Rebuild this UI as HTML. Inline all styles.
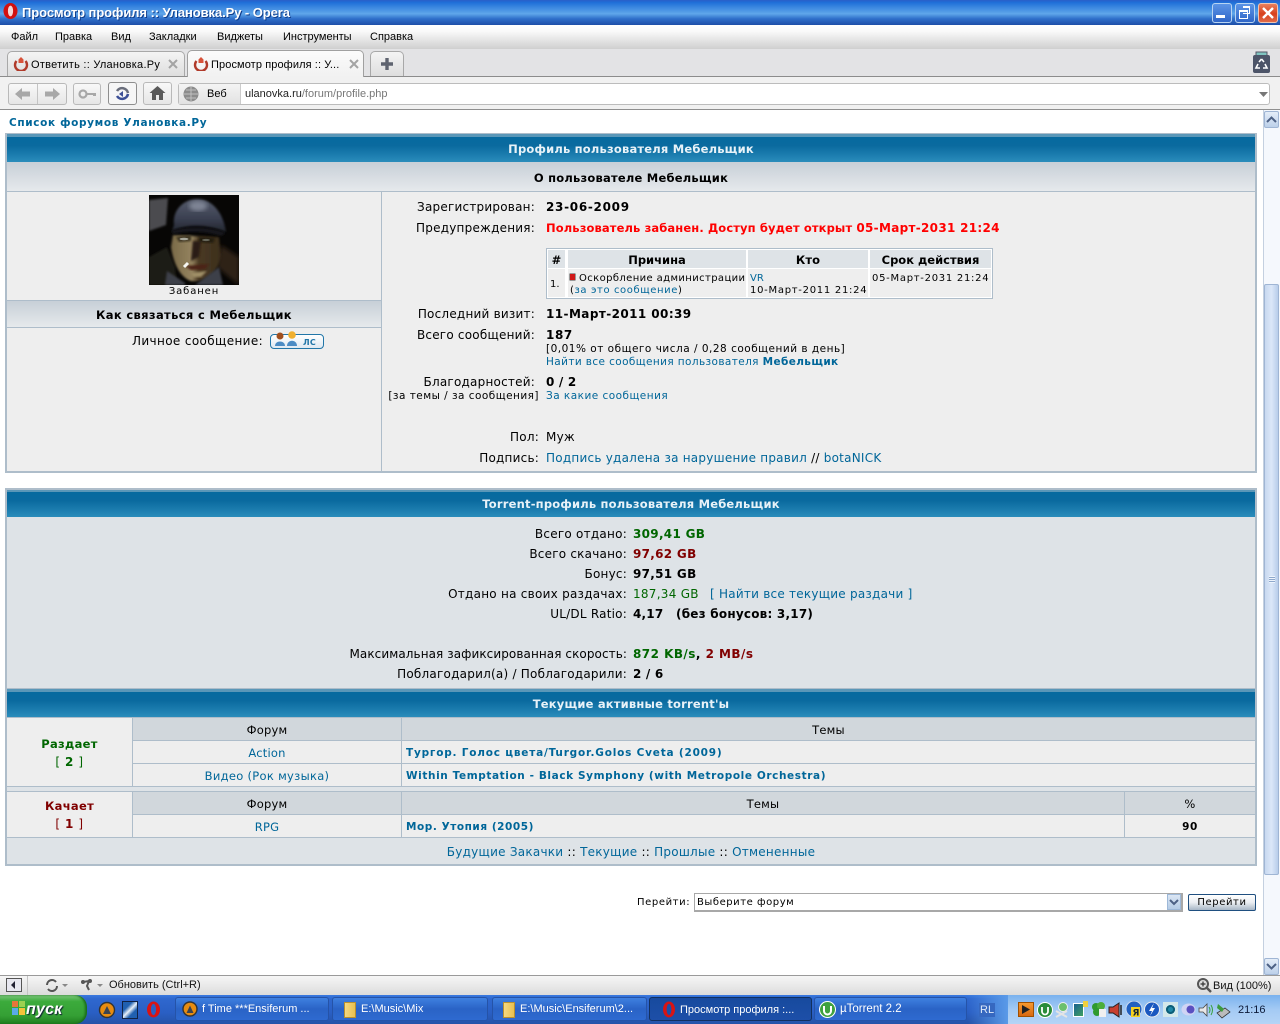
<!DOCTYPE html>
<html><head><meta charset="utf-8"><style>
html,body{margin:0;padding:0;background:#fff}
#r{position:relative;width:1280px;height:1024px;overflow:hidden;background:#fff;font-family:"DejaVu Sans","Liberation Sans",sans-serif;font-size:12px;color:#000;letter-spacing:.22px}
#r div,#r svg{position:absolute}
.t{white-space:nowrap;line-height:14px}
.c{text-align:center}.r{text-align:right}
.b{font-weight:bold}
.u{font-family:"Liberation Sans",sans-serif;font-size:11px;letter-spacing:0}
a,.l{color:#006699}
.blue{background:linear-gradient(#066a9f,#0a6a9f 35%,#2a8cbb);left:7px;width:1248px}
.wh{color:#e8f2f8;font-weight:bold;font-size:11.5px;letter-spacing:.2px}
.sub{background:linear-gradient(#c7cfd7,#e6e9ec);left:7px}
.line{background:#aebdca}
.btn{border:1px solid #b9b9b9;border-radius:3px;background:linear-gradient(#f8f8f8,#e6e6e6);box-sizing:border-box}
.task{top:997px;height:24px;border-radius:3px;box-sizing:border-box;background:linear-gradient(#3f80e0,#2a63c6 50%,#2e6ad0);border:1px solid #2553a8;color:#fff;font-family:"Liberation Sans",sans-serif;font-size:11px;line-height:22px;white-space:nowrap}
.v{font-weight:bold;letter-spacing:.4px}
.s{font-size:11.5px;letter-spacing:.2px}
.m{font-size:10.5px;letter-spacing:.45px}
.x{font-size:10px}
.tt{font-weight:bold;font-size:10.5px;letter-spacing:.6px;color:#006699}
</style></head><body><div id="r">

<!-- title bar -->
<div style="left:0;top:0;width:1280px;height:25px;background:linear-gradient(#2a5fc8 0,#1f6fd8 10%,#5fa6ea 55%,#2f6fca 75%,#1d4ea8 100%)"></div>
<svg style="left:3px;top:3px" width="15" height="16" viewBox="0 0 15 16"><ellipse cx="7.5" cy="8" rx="7" ry="8" fill="#d21010"/><ellipse cx="7.5" cy="8" rx="2.6" ry="5.4" fill="#f4d8d8"/></svg>
<div class="t b" style="left:22px;top:6px;color:#fff;font-family:'Liberation Sans',sans-serif;font-size:13px;letter-spacing:-.08px;text-shadow:1px 1px 0 #0f3d8c">Просмотр профиля :: Улановка.Ру - Opera</div>
<div style="left:1212px;top:3px;width:18px;height:18px;border:1px solid #b8d4f2;border-radius:3px;background:linear-gradient(#5c94e6,#2f66c8)"></div>
<div style="left:1216px;top:15px;width:9px;height:3px;background:#fff"></div>
<div style="left:1235px;top:3px;width:18px;height:18px;border:1px solid #b8d4f2;border-radius:3px;background:linear-gradient(#5c94e6,#2f66c8)"></div>
<div style="left:1239px;top:10px;width:7px;height:6px;border:1px solid #fff;border-top-width:2px"></div>
<div style="left:1243px;top:6px;width:6px;height:5px;border:1px solid #fff;border-top-width:2px;border-left:none"></div>
<div style="left:1258px;top:3px;width:18px;height:18px;border:1px solid #f0c4b0;border-radius:3px;background:linear-gradient(#e8805e,#d8401c 55%,#e06a48)"></div>
<svg style="left:1261px;top:6px" width="14" height="14"><path d="M2 2 L12 12 M12 2 L2 12" stroke="#fff" stroke-width="2.4"/></svg>

<!-- menu -->
<div style="left:0;top:25px;width:1280px;height:24px;background:linear-gradient(#fff,#fafafa 25%,#cfcfcf)"></div>
<div class="t u" style="left:11px;top:30px">Файл</div>
<div class="t u" style="left:55px;top:30px">Правка</div>
<div class="t u" style="left:111px;top:30px">Вид</div>
<div class="t u" style="left:149px;top:30px">Закладки</div>
<div class="t u" style="left:217px;top:30px">Виджеты</div>
<div class="t u" style="left:283px;top:30px">Инструменты</div>
<div class="t u" style="left:370px;top:30px">Справка</div>

<!-- tab bar -->
<div style="left:0;top:49px;width:1280px;height:28px;background:#e3e3e5"></div>
<div style="left:0;top:76px;width:1280px;height:1px;background:#8c8c8c"></div>
<div style="left:0;top:77px;width:1280px;height:32px;background:#f1f1f1"></div>
<div style="left:7px;top:51px;width:178px;height:25px;box-sizing:border-box;border:1px solid #a8a8a8;border-bottom:none;border-radius:5px 5px 0 0;background:linear-gradient(#f4f4f4,#dedede)"></div>
<div style="left:187px;top:50px;width:177px;height:27px;box-sizing:border-box;border:1px solid #a0a0a0;border-bottom:none;border-radius:5px 5px 0 0;background:linear-gradient(#fbfbfb,#f1f1f1)"></div>
<div style="left:370px;top:51px;width:34px;height:25px;box-sizing:border-box;border:1px solid #a8a8a8;border-bottom:none;border-radius:5px 5px 0 0;background:linear-gradient(#f4f4f4,#dedede)"></div>
<svg style="left:13px;top:56px" width="16" height="15" viewBox="0 0 16 15"><path d="M3.5 5 A6 6 0 1 0 12.5 5" fill="none" stroke="#b03a2a" stroke-width="2.4"/><path d="M5.5 7 V3.5 L8 1 L10.5 3.5 V7 Z" fill="#d8523a"/></svg>
<svg style="left:193px;top:56px" width="16" height="15" viewBox="0 0 16 15"><path d="M3.5 5 A6 6 0 1 0 12.5 5" fill="none" stroke="#b03a2a" stroke-width="2.4"/><path d="M5.5 7 V3.5 L8 1 L10.5 3.5 V7 Z" fill="#d8523a"/></svg>
<div class="t u" style="left:31px;top:58px;letter-spacing:.26px">Ответить :: Улановка.Ру</div>
<div class="t u" style="left:211px;top:58px;letter-spacing:.1px">Просмотр профиля :: У...</div>
<svg style="left:168px;top:59px" width="10" height="10"><path d="M1 1 L9 9 M9 1 L1 9" stroke="#a4a4a4" stroke-width="2"/></svg>
<svg style="left:349px;top:59px" width="10" height="10"><path d="M1 1 L9 9 M9 1 L1 9" stroke="#a4a4a4" stroke-width="2"/></svg>
<svg style="left:381px;top:58px" width="12" height="12"><path d="M6 0 V12 M0 6 H12" stroke="#5f6470" stroke-width="3.4"/></svg>
<svg style="left:1252px;top:51px" width="19" height="24" viewBox="0 0 19 24"><rect x="4" y="1" width="11" height="4" fill="#7fc4c0" stroke="#556"/><rect x="1" y="4" width="17" height="18" rx="2" fill="#4c5468"/><path d="M9.5 8 L12 11 M13 13 L15 17 H11 M8 17 H4 L6 13 M7 11 L9.5 8" fill="none" stroke="#fff" stroke-width="1.6"/></svg>

<!-- nav bar -->
<div class="btn" style="left:8px;top:83px;width:59px;height:22px"></div>
<div style="left:37px;top:84px;width:1px;height:20px;background:#c4c4c4"></div>
<svg style="left:14px;top:87px" width="18" height="14"><path d="M1 7 L8 1 V4.5 H16 V9.5 H8 V13 Z" fill="#a8a8a8"/></svg>
<svg style="left:43px;top:87px" width="18" height="14"><path d="M17 7 L10 1 V4.5 H2 V9.5 H10 V13 Z" fill="#a8a8a8"/></svg>
<div class="btn" style="left:73px;top:83px;width:28px;height:22px"></div>
<svg style="left:78px;top:88px" width="19" height="12"><circle cx="5" cy="6" r="3.5" fill="none" stroke="#a8a8a8" stroke-width="2.2"/><path d="M8 5 H18 V8 H15 V7 H8 Z" fill="#a8a8a8"/></svg>
<div class="btn" style="left:108px;top:82px;width:29px;height:23px;border-color:#8e8e8e;background:#f6f6f6"></div>
<svg style="left:113px;top:85px" width="19" height="17" viewBox="0 0 19 17"><path d="M4 6 A6 6 0 0 1 15 8" fill="none" stroke="#6a6e7c" stroke-width="2.6"/><path d="M15 9 A6 6 0 0 1 4 11" fill="none" stroke="#3c4f96" stroke-width="2.6"/><path d="M6 9 L10 6 V12 Z" fill="#3c4f96"/></svg>
<div class="btn" style="left:143px;top:82px;width:29px;height:23px"></div>
<svg style="left:149px;top:85px" width="17" height="16"><path d="M8.5 1 L16.5 8 H14 V15 H10 V10 H7 V15 H3 V8 H.5 Z" fill="#5a5a5a"/></svg>
<div style="left:178px;top:83px;width:1092px;height:22px;box-sizing:border-box;border:1px solid #bcbcbc;border-radius:3px;background:#fff"></div>
<div style="left:179px;top:84px;width:61px;height:20px;background:linear-gradient(#f4f4f4,#e2e2e2);border-right:1px solid #ccc"></div>
<svg style="left:183px;top:86px" width="16" height="16"><circle cx="8" cy="8" r="7.5" fill="#8c8c8c"/><path d="M1 8 H15 M8 1 V15 M3 4 H13 M3 12 H13" stroke="#c0c0c0" stroke-width="1"/></svg>
<div class="t u" style="left:207px;top:87px">Веб</div>
<div class="t u" style="left:245px;top:87px"><span style="color:#222">ulanovka.ru</span><span style="color:#777">/forum/profile.php</span></div>
<svg style="left:1259px;top:92px" width="9" height="5"><path d="M0 0 H9 L4.5 5 Z" fill="#777"/></svg>
<div style="left:0;top:109px;width:1280px;height:1px;background:#8f8f8f"></div>

<!-- breadcrumb -->
<div class="t b l" style="left:9px;top:116px;font-size:10.5px;letter-spacing:.65px">Список форумов Улановка.Ру</div>

<!-- TABLE 1 -->
<div style="left:5px;top:133px;width:1252px;height:340px;box-sizing:border-box;border:2px solid #aebdca;background:#eeeeee"></div>
<div style="left:7px;top:134px;width:1248px;height:3px;background:#5a97b8"></div>
<div class="blue" style="top:137px;height:25px"></div>
<div class="t c wh" style="left:7px;width:1248px;top:142px">Профиль пользователя Мебельщик</div>
<div class="sub" style="top:162px;width:1248px;height:29px"></div>
<div class="line" style="left:7px;top:191px;width:1248px;height:1px"></div>
<div class="t c b" style="left:7px;width:1248px;top:171px;font-size:11.5px;letter-spacing:.22px">О пользователе Мебельщик</div>
<div class="line" style="left:381px;top:192px;width:1px;height:279px"></div>

<!-- avatar -->
<svg style="left:149px;top:195px" width="90" height="90" viewBox="0 0 90 90">
<defs>
<linearGradient id="hg" x1="0" y1="0" x2="0" y2="1"><stop offset="0" stop-color="#565c6c"/><stop offset=".6" stop-color="#3a3f50"/><stop offset="1" stop-color="#22262f"/></linearGradient>
<linearGradient id="fg" x1="0" y1="0" x2="1" y2="0"><stop offset="0" stop-color="#7a6a48"/><stop offset=".42" stop-color="#94835f"/><stop offset=".55" stop-color="#4a3a24"/><stop offset="1" stop-color="#3c2e1c"/></linearGradient>
<filter id="bl"><feGaussianBlur stdDeviation="1"/></filter><filter id="bl2"><feGaussianBlur stdDeviation="2"/></filter>
</defs>
<rect width="90" height="90" fill="#070605"/>
<path d="M0 5 L19 3 L17 30 L0 36 Z" fill="#4c4c50" filter="url(#bl)"/>
<path d="M0 62 L18 52 L26 72 L28 90 H0 Z" fill="#1c1a18" filter="url(#bl)"/>
<path d="M72 50 L90 62 V90 L68 72 Z" fill="#2e2016" filter="url(#bl2)"/>
<path d="M24 40 L70 42 L72 60 C70 76 58 88 42 86 C30 82 24 66 22 52Z" fill="url(#fg)" filter="url(#bl)"/>
<path d="M25 30 C23 14 36 4 48 4 C62 4 74 16 77 37 C60 30 40 28 23 36Z" fill="url(#hg)" filter="url(#bl)"/>
<ellipse cx="49" cy="11" rx="9" ry="5" fill="#7e8494" filter="url(#bl2)"/>
<path d="M22 36 C40 30 62 32 77 38 L72 41 C55 36 40 36 24 39Z" fill="#15171d" filter="url(#bl)"/>
<path d="M27 42 L42 40 L42 46 L30 47Z" fill="#3c3420" filter="url(#bl)"/><path d="M50 42 L66 43 L64 48 L50 47Z" fill="#241c10" filter="url(#bl)"/>
<ellipse cx="35" cy="44" rx="4.5" ry="1.3" fill="#a8a89c"/><ellipse cx="57" cy="45" rx="4" ry="1.1" fill="#66665a"/>
<path d="M44 46 L52 46 L50 62 L42 66 Z" fill="#2a1f12" filter="url(#bl)"/>
<path d="M36 71 L60 69 L56 74 L42 75Z" fill="#4c2418" filter="url(#bl)"/>
<path d="M42 78 L58 76 L52 82 L44 82Z" fill="#a09068" filter="url(#bl)"/>
<path d="M35 72 L39 68" stroke="#f6f6f2" stroke-width="3"/>
<path d="M18 76 L36 88 V90 H16 Z M46 90 L70 72 L74 90Z" fill="#3c3f48" filter="url(#bl)"/>
</svg>
<div class="t c x" style="left:7px;width:374px;top:285px;letter-spacing:.9px">Забанен</div>
<div class="line" style="left:7px;top:300px;width:374px;height:1px"></div>
<div class="sub" style="top:301px;width:374px;height:26px"></div>
<div class="line" style="left:7px;top:327px;width:374px;height:1px"></div>
<div class="t c b" style="left:7px;width:374px;top:308px;font-size:11.5px;letter-spacing:.35px">Как связаться с Мебельщик</div>
<div class="t r" style="left:7px;width:256px;top:334px;letter-spacing:.37px">Личное сообщение:</div>
<div style="left:270px;top:334px;width:54px;height:15px;box-sizing:border-box;border:1px solid #2276a8;border-radius:4px;background:linear-gradient(#fff,#dfe9f2)"></div>
<svg style="left:273px;top:331px" width="28" height="17"><circle cx="7" cy="5" r="3.5" fill="#a05020"/><path d="M2 15 C2 9 12 9 12 15Z" fill="#4c8cc4"/><circle cx="19" cy="4" r="3.8" fill="#f0b030"/><path d="M14 15 C14 8 24 8 24 15Z" fill="#4c8cc4"/></svg>
<div class="t b" style="left:303px;top:336px;font-size:8px;color:#2276a8">ЛС</div>

<!-- profile rows -->
<div class="t r" style="left:382px;width:153px;top:200px">Зарегистрирован:</div>
<div class="t v" style="left:546px;top:200px;letter-spacing:.7px">23-06-2009</div>
<div class="t r" style="left:382px;width:153px;top:221px">Предупреждения:</div>
<div class="t b" style="left:546px;top:221px;color:#f00;font-size:11.5px;letter-spacing:.12px">Пользователь забанен. Доступ будет открыт <span style="font-size:12px;letter-spacing:.3px">05-Март-2031 21:24</span></div>

<div style="left:546px;top:248px;width:447px;height:51px;box-sizing:border-box;border:1px solid #aebdca;background:#fff"></div>
<div style="left:548px;top:250px;width:17px;height:18px;background:#dee3e7"></div>
<div style="left:568px;top:250px;width:178px;height:18px;background:#dee3e7"></div>
<div style="left:748px;top:250px;width:120px;height:18px;background:#dee3e7"></div>
<div style="left:870px;top:250px;width:121px;height:18px;background:#dee3e7"></div>
<div style="left:548px;top:269px;width:17px;height:28px;background:#eeeeee"></div>
<div style="left:568px;top:269px;width:178px;height:28px;background:#eeeeee"></div>
<div style="left:748px;top:269px;width:120px;height:28px;background:#eeeeee"></div>
<div style="left:870px;top:269px;width:121px;height:28px;background:#eeeeee"></div>
<div class="t c b" style="left:548px;width:17px;top:253px;font-size:11.5px;letter-spacing:0">#</div>
<div class="t c b" style="left:568px;width:178px;top:253px;font-size:11.5px;letter-spacing:0">Причина</div>
<div class="t c b" style="left:748px;width:120px;top:253px;font-size:11.5px;letter-spacing:.1px">Кто</div>
<div class="t c b" style="left:870px;width:121px;top:253px;font-size:11.5px;letter-spacing:0">Срок действия</div>
<div class="t x" style="left:550px;top:278px;letter-spacing:0">1.</div>
<div style="left:570px;top:274px;width:5px;height:6px;background:#d01818;box-shadow:0 0 0 .5px #444"></div>
<div class="t x" style="left:579px;top:272px;letter-spacing:.39px">Оскорбление администрации</div>
<div class="t x" style="left:570px;top:284px;letter-spacing:.6px">(<span class="l">за это сообщение</span>)</div>
<div class="t l x" style="left:750px;top:272px;letter-spacing:0">VR</div>
<div class="t x" style="left:750px;top:284px;letter-spacing:.72px">10-Март-2011 21:24</div>
<div class="t x" style="left:872px;top:272px;letter-spacing:.72px">05-Март-2031 21:24</div>

<div class="t r" style="left:382px;width:153px;top:307px">Последний визит:</div>
<div class="t v" style="left:546px;top:307px;letter-spacing:.42px">11-Март-2011 00:39</div>
<div class="t r" style="left:382px;width:153px;top:328px">Всего сообщений:</div>
<div class="t v" style="left:546px;top:328px;letter-spacing:.6px">187</div>
<div class="t m" style="left:546px;top:342px;letter-spacing:.5px">[0,01% от общего числа / 0,28 сообщений в день]</div>
<div class="t l m" style="left:546px;top:355px;letter-spacing:.39px">Найти все сообщения пользователя <b>Мебельщик</b></div>
<div class="t r" style="left:382px;width:153px;top:375px">Благодарностей:</div>
<div class="t v" style="left:546px;top:375px;letter-spacing:.2px">0 / 2</div>
<div class="t r m" style="left:382px;width:157px;top:389px;letter-spacing:.47px">[за темы / за сообщения]</div>
<div class="t l m" style="left:546px;top:389px;letter-spacing:.47px">За какие сообщения</div>
<div class="t r" style="left:382px;width:157px;top:430px">Пол:</div>
<div class="t" style="left:546px;top:430px">Муж</div>
<div class="t r" style="left:382px;width:157px;top:451px">Подпись:</div>
<div class="t" style="left:546px;top:451px;letter-spacing:.24px"><span class="l">Подпись удалена за нарушение правил</span> // <span class="l">botaNICK</span></div>

<!-- TABLE 2 -->
<div style="left:5px;top:488px;width:1252px;height:378px;box-sizing:border-box;border:2px solid #aebdca;background:#dee3e7"></div>
<div style="left:7px;top:490px;width:1248px;height:3px;background:#5a97b8"></div>
<div class="blue" style="top:492px;height:25px"></div>
<div class="t c wh" style="left:7px;width:1248px;top:497px">Torrent-профиль пользователя Мебельщик</div>

<div class="t r" style="left:7px;width:620px;top:527px;letter-spacing:.25px">Всего отдано:</div>
<div class="t v" style="left:633px;top:527px;color:#006600;letter-spacing:.3px">309,41 GB</div>
<div class="t r" style="left:7px;width:620px;top:547px">Всего скачано:</div>
<div class="t v" style="left:633px;top:547px;color:#800000;letter-spacing:.3px">97,62 GB</div>
<div class="t r" style="left:7px;width:620px;top:567px">Бонус:</div>
<div class="t v" style="left:633px;top:567px;letter-spacing:.3px">97,51 GB</div>
<div class="t r" style="left:7px;width:620px;top:587px;letter-spacing:.26px">Отдано на своих раздачах:</div>
<div class="t" style="left:633px;top:587px;color:#006600;letter-spacing:.27px">187,34 GB</div>
<div class="t l" style="left:710px;top:587px;letter-spacing:.24px">[ Найти все текущие раздачи ]</div>
<div class="t r" style="left:7px;width:620px;top:607px">UL/DL Ratio:</div>
<div class="t v" style="left:633px;top:607px;letter-spacing:.2px">4,17</div>
<div class="t b" style="left:676px;top:607px;letter-spacing:.22px">(без бонусов: 3,17)</div>
<div class="t r" style="left:7px;width:620px;top:647px;letter-spacing:.08px">Максимальная зафиксированная скорость:</div>
<div class="t v" style="left:633px;top:647px;letter-spacing:.46px"><span style="color:#006600">872 KB/s</span>, <span style="color:#800000">2 MB/s</span></div>
<div class="t r" style="left:7px;width:620px;top:667px;letter-spacing:.23px">Поблагодарил(а) / Поблагодарили:</div>
<div class="t v" style="left:633px;top:667px;letter-spacing:.2px">2 / 6</div>

<div class="line" style="left:7px;top:688px;width:1248px;height:1px"></div>
<div style="left:7px;top:689px;width:1248px;height:3px;background:#5a97b8"></div>
<div class="blue" style="top:692px;height:25px"></div>
<div class="t c wh" style="left:7px;width:1248px;top:697px">Текущие активные torrent'ы</div>

<!-- seeding -->
<div style="left:7px;top:717px;width:1248px;height:69px;background:#eeeeee"></div>
<div style="left:133px;top:718px;width:1122px;height:22px;background:#d1d7dc"></div>
<div class="line" style="left:7px;top:717px;width:1248px;height:1px"></div>
<div class="line" style="left:133px;top:740px;width:1122px;height:1px"></div>
<div class="line" style="left:133px;top:763px;width:1122px;height:1px"></div>
<div class="line" style="left:7px;top:786px;width:1248px;height:1px"></div>
<div class="line" style="left:132px;top:718px;width:1px;height:68px"></div>
<div class="line" style="left:401px;top:718px;width:1px;height:68px"></div>
<div class="t c b" style="left:7px;width:125px;top:737px;color:#006600;font-size:11.5px;letter-spacing:.3px">Раздает</div>
<div class="t c" style="left:7px;width:125px;top:755px;color:#006600;letter-spacing:.6px">[ <b>2</b> ]</div>
<div class="t c s" style="left:133px;width:268px;top:723px">Форум</div>
<div class="t c s" style="left:402px;width:853px;top:723px">Темы</div>
<div class="t c l s" style="left:133px;width:268px;top:746px;letter-spacing:.2px">Action</div>
<div class="t c l s" style="left:133px;width:268px;top:769px;letter-spacing:.3px">Видео (Рок музыка)</div>
<div class="t tt" style="left:406px;top:746px;letter-spacing:.8px">Тургор. Голос цвета/Turgor.Golos Cveta (2009)</div>
<div class="t tt" style="left:406px;top:769px">Within Temptation - Black Symphony (with Metropole Orchestra)</div>

<!-- leeching -->
<div style="left:7px;top:791px;width:1248px;height:46px;background:#eeeeee"></div>
<div style="left:133px;top:792px;width:1122px;height:22px;background:#d1d7dc"></div>
<div class="line" style="left:7px;top:791px;width:1248px;height:1px"></div>
<div class="line" style="left:133px;top:814px;width:1122px;height:1px"></div>
<div class="line" style="left:7px;top:837px;width:1248px;height:1px"></div>
<div class="line" style="left:132px;top:792px;width:1px;height:45px"></div>
<div class="line" style="left:401px;top:792px;width:1px;height:45px"></div>
<div class="line" style="left:1124px;top:792px;width:1px;height:45px"></div>
<div class="t c b" style="left:7px;width:125px;top:799px;color:#800000;font-size:11.5px;letter-spacing:.3px">Качает</div>
<div class="t c" style="left:7px;width:125px;top:817px;color:#800000;letter-spacing:.6px">[ <b>1</b> ]</div>
<div class="t c s" style="left:133px;width:268px;top:797px">Форум</div>
<div class="t c s" style="left:402px;width:722px;top:797px">Темы</div>
<div class="t c s" style="left:1125px;width:130px;top:797px">%</div>
<div class="t c l s" style="left:133px;width:268px;top:820px">RPG</div>
<div class="t tt" style="left:406px;top:820px;letter-spacing:.55px">Мор. Утопия (2005)</div>
<div class="t c b" style="left:1125px;width:130px;top:820px;font-size:10.5px;letter-spacing:.6px">90</div>

<div class="t c" style="left:7px;width:1248px;top:845px;letter-spacing:.25px"><span class="l">Будущие Закачки</span> :: <span class="l">Текущие</span> :: <span class="l">Прошлые</span> :: <span class="l">Отмененные</span></div>

<!-- jump -->
<div class="t x" style="left:637px;top:896px;letter-spacing:.6px">Перейти:</div>
<div style="left:694px;top:893px;width:489px;height:19px;box-sizing:border-box;border:1px solid #a8a8a8;border-bottom-width:2px;border-right-width:2px;background:#fff"></div>
<div class="t x" style="left:697px;top:896px;letter-spacing:.55px">Выберите форум</div>
<div style="left:1167px;top:894px;width:14px;height:16px;background:linear-gradient(#dbe6f4,#b4cbe6);border:1px solid #9db8d8;box-sizing:border-box"></div>
<svg style="left:1169px;top:899px" width="10" height="7"><path d="M1 1 L5 5 L9 1" fill="none" stroke="#4d6185" stroke-width="2"/></svg>
<div style="left:1188px;top:894px;width:68px;height:17px;box-sizing:border-box;border:1px solid #1f4f80;border-radius:2px;background:linear-gradient(#fff,#ebeef2 50%,#a8b6c6)"></div>
<div class="t c x" style="left:1188px;width:68px;top:896px;letter-spacing:.6px">Перейти</div>

<!-- scrollbar -->
<div style="left:1263px;top:110px;width:17px;height:866px;background:#f5f8fd;border-left:1px solid #c4d0e0;box-sizing:border-box"></div>
<div style="left:1264px;top:111px;width:15px;height:17px;box-sizing:border-box;border:1px solid #9fb5d4;border-radius:2px;background:linear-gradient(#e4edf8,#bcd0ea)"></div>
<svg style="left:1266px;top:116px" width="11" height="7"><path d="M1 6 L5.5 1.5 L10 6" fill="none" stroke="#4d6185" stroke-width="2"/></svg>
<div style="left:1264px;top:284px;width:15px;height:591px;box-sizing:border-box;border:1px solid #9fb5d4;border-radius:2px;background:linear-gradient(90deg,#c8d8f0,#dbe7f8 50%,#b8cdea)"></div>
<div style="left:1269px;top:576px;width:6px;height:7px;background:repeating-linear-gradient(#eef4fc 0 1px,#8ea8cc 1px 2px)"></div>
<div style="left:1264px;top:958px;width:15px;height:17px;box-sizing:border-box;border:1px solid #9fb5d4;border-radius:2px;background:linear-gradient(#e4edf8,#bcd0ea)"></div>
<svg style="left:1266px;top:963px" width="11" height="7"><path d="M1 1 L5.5 5.5 L10 1" fill="none" stroke="#4d6185" stroke-width="2"/></svg>

<!-- status bar -->
<div style="left:0;top:975px;width:1280px;height:1px;background:#9a9a9a"></div>
<div style="left:0;top:976px;width:1280px;height:19px;background:linear-gradient(#f6f6f6,#dcdcdc)"></div>
<div style="left:6px;top:978px;width:16px;height:14px;box-sizing:border-box;border:1px solid #555;background:#e8e8f0"></div>
<svg style="left:10px;top:981px" width="7" height="8"><path d="M5 0 L1 4 L5 8 Z" fill="#223"/></svg>
<div style="left:27px;top:976px;width:1px;height:19px;background:#c4c4c4"></div>
<svg style="left:46px;top:979px" width="22" height="13"><path d="M1 6 A5 5 0 0 1 10 3 M11 7 A5 5 0 0 1 2 10" fill="none" stroke="#555" stroke-width="2"/><path d="M16 5 H22 L19 8 Z" fill="#888"/></svg>
<svg style="left:80px;top:978px" width="24" height="14"><path d="M3 4 L9 3 L7 8 L9 12" fill="none" stroke="#555" stroke-width="2"/><circle cx="3" cy="4" r="2" fill="#555"/><circle cx="10" cy="3" r="2" fill="#555"/><path d="M17 6 H23 L20 9 Z" fill="#888"/></svg>
<div class="t u" style="left:109px;top:978px;color:#111">Обновить (Ctrl+R)</div>
<svg style="left:1196px;top:977px" width="16" height="16"><circle cx="7" cy="7" r="5" fill="#ddd" stroke="#555" stroke-width="2"/><path d="M10.5 10.5 L15 15" stroke="#555" stroke-width="2.4"/><path d="M4.5 7 H9.5 M7 4.5 V9.5" stroke="#333" stroke-width="1.2"/></svg>
<div class="t u" style="left:1213px;top:979px;color:#111">Вид (100%)</div>

<!-- taskbar -->
<div style="left:0;top:995px;width:1280px;height:29px;background:linear-gradient(#3a7ae0 0,#2f68cf 12%,#2a5fc4 60%,#2553a8)"></div>
<div style="left:968px;top:995px;width:40px;height:29px;background:linear-gradient(90deg,rgba(70,130,230,0),#5a9ae8)"></div>
<div style="left:0;top:995px;width:87px;height:29px;border-radius:0 12px 12px 0;background:linear-gradient(#7fc87f,#3cab3c 22%,#35a035 70%,#1f7f1f);box-shadow:inset -2px 0 2px #1a6c1a"></div>
<svg style="left:11px;top:1000px" width="15" height="16"><rect x="1" y="1" width="6" height="6" fill="#e8763a"/><rect x="8" y="1" width="6" height="6" fill="#9dd050"/><rect x="1" y="8" width="6" height="7" fill="#5aaae8"/><rect x="8" y="8" width="6" height="7" fill="#f5c33a"/></svg>
<div class="t" style="left:26px;top:1003px;color:#fff;font-family:'Liberation Sans',sans-serif;font-weight:bold;font-style:italic;font-size:16px;letter-spacing:.2px;text-shadow:1px 1px 1px #123">пуск</div>
<svg style="left:98px;top:1001px" width="18" height="18"><circle cx="9" cy="9" r="7.5" fill="#e88c10" stroke="#333" stroke-width="1.4"/><path d="M5 13 L9 5 L13 13 Z" fill="#3c4450"/></svg>
<div style="left:122px;top:1001px;width:14px;height:16px;background:linear-gradient(135deg,#2060b0 30%,#e8f0f8 50%,#2060b0 70%);border:1px solid #124"></div>
<svg style="left:146px;top:1001px" width="15" height="17"><ellipse cx="7.5" cy="8.5" rx="6.5" ry="8" fill="#d81414"/><ellipse cx="7.5" cy="8.5" rx="2.6" ry="5.6" fill="#2a5fc4"/></svg>

<div class="task" style="left:175px;width:154px"></div>
<svg style="left:182px;top:1001px" width="16" height="16"><circle cx="8" cy="8" r="7" fill="#e88c10" stroke="#333" stroke-width="1.4"/><path d="M4.5 12 L8 4.5 L11.5 12 Z" fill="#3c4450"/></svg>
<div class="t u" style="left:202px;top:1002px;color:#fff">f Time ***Ensiferum ...</div>
<div class="task" style="left:332px;width:156px"></div>
<div style="left:344px;top:1002px;width:10px;height:14px;background:linear-gradient(90deg,#f5d880,#e8c050);border:1px solid #b89030"></div>
<div class="t u" style="left:361px;top:1002px;color:#fff">E:\Music\Mix</div>
<div class="task" style="left:492px;width:155px"></div>
<div style="left:503px;top:1002px;width:10px;height:14px;background:linear-gradient(90deg,#f5d880,#e8c050);border:1px solid #b89030"></div>
<div class="t u" style="left:520px;top:1002px;color:#fff">E:\Music\Ensiferum\2...</div>
<div class="task" style="left:649px;width:163px;background:linear-gradient(#174a9e,#1d4fa8);border-color:#12305f"></div>
<svg style="left:662px;top:1001px" width="14" height="17"><ellipse cx="7" cy="8.5" rx="6" ry="8" fill="#d81414"/><ellipse cx="7" cy="8.5" rx="2.4" ry="5.6" fill="#1d4fa8"/></svg>
<div class="t u" style="left:680px;top:1003px;color:#fff">Просмотр профиля :...</div>
<div class="task" style="left:814px;width:153px"></div>
<svg style="left:819px;top:1001px" width="17" height="17"><circle cx="8.5" cy="8.5" r="8" fill="#3fa13f" stroke="#fff"/><path d="M5 5 V10 A3.5 3.5 0 0 0 12 10 V5" fill="none" stroke="#fff" stroke-width="2"/></svg>
<div class="t u" style="left:840px;top:1002px;color:#fff;font-size:11.5px">µTorrent 2.2</div>
<div class="t u" style="left:979px;top:1003px;color:#dfe9f8;background:#3668c0;padding:0 1px">RL</div>

<!-- tray -->
<div style="left:1008px;top:995px;width:272px;height:29px;background:linear-gradient(#7ab2ee,#a4caf4 50%,#b4d4f6)"></div>
<div style="left:1018px;top:1002px;width:16px;height:15px;background:linear-gradient(#f59a30,#d86810);border:1px solid #a05000;box-sizing:border-box"></div>
<svg style="left:1022px;top:1005px" width="8" height="9"><path d="M0 0 L8 4.5 L0 9Z" fill="#222"/></svg>
<svg style="left:1037px;top:1002px" width="16" height="16"><circle cx="8" cy="8" r="7.5" fill="#2a8c3a" stroke="#fff"/><path d="M5 5 V9.5 A3 3 0 0 0 11 9.5 V5" fill="none" stroke="#fff" stroke-width="1.8"/></svg>
<svg style="left:1054px;top:1001px" width="16" height="17"><circle cx="9" cy="6" r="4.5" fill="#6cc06c" stroke="#eee"/><path d="M2 16 L13 10 M13 16 L2 10" stroke="#e4e4e4" stroke-width="2"/></svg>
<div style="left:1073px;top:1003px;width:11px;height:14px;background:linear-gradient(135deg,#186090,#40a060);border:1px solid #fff;box-sizing:border-box"></div>
<div style="left:1083px;top:1001px;width:5px;height:6px;background:#f0d040"></div>
<svg style="left:1090px;top:1001px" width="17" height="17"><circle cx="6" cy="6" r="4" fill="#2f9a2f"/><circle cx="11" cy="5" r="4" fill="#4cae3a"/><circle cx="7" cy="11" r="4" fill="#2f9a2f"/><rect x="9" y="8" width="7" height="8" fill="#f0f0f0"/></svg>
<svg style="left:1108px;top:1002px" width="15" height="16"><path d="M1 5 H5 L11 1 V15 L5 11 H1Z" fill="#c84030" stroke="#222"/><path d="M13 3 V13" stroke="#222" stroke-width="1.5"/></svg>
<svg style="left:1125px;top:1001px" width="18" height="18"><circle cx="9" cy="8" r="8" fill="#2060c0" stroke="#c8d8f0"/><rect x="6" y="6" width="9" height="10" fill="#f5d020"/><text x="7.5" y="14.5" font-size="9" font-weight="bold" fill="#123">Я</text></svg>
<svg style="left:1144px;top:1001px" width="16" height="17"><circle cx="8" cy="8.5" r="7.5" fill="#1a58c0" stroke="#eee"/><path d="M10 2 L5 10 H8 L6 15 L11 7 H8Z" fill="#fff"/></svg>
<div style="left:1163px;top:1002px;width:15px;height:15px;background:#d4e8ea"></div>
<div style="left:1166px;top:1005px;width:9px;height:9px;border-radius:50%;background:#1f88a8;box-shadow:inset 0 0 0 2px #0c5e78"></div>
<svg style="left:1181px;top:1002px" width="15" height="15"><ellipse cx="7.5" cy="7.5" rx="7" ry="6" fill="#d0d4f4"/><circle cx="9.5" cy="7.5" r="4" fill="#5a50c0"/></svg>
<svg style="left:1198px;top:1002px" width="16" height="16"><path d="M1 6 H5 L9 2 V14 L5 10 H1Z" fill="#e8e8e8" stroke="#444" stroke-width=".8"/><path d="M11 5 Q13 8 11 11 M13 3 Q16 8 13 13" fill="none" stroke="#38a038"/></svg>
<svg style="left:1215px;top:1001px" width="16" height="18"><path d="M2 12 L10 7 L15 11 L7 17Z" fill="#bbb" stroke="#333" stroke-width=".8"/><path d="M3 3 L9 8 L7 11 L2 7Z" fill="#3e9a3e"/></svg>
<div class="t u" style="left:1238px;top:1003px;color:#0c1a38">21:16</div>

</div></body></html>
